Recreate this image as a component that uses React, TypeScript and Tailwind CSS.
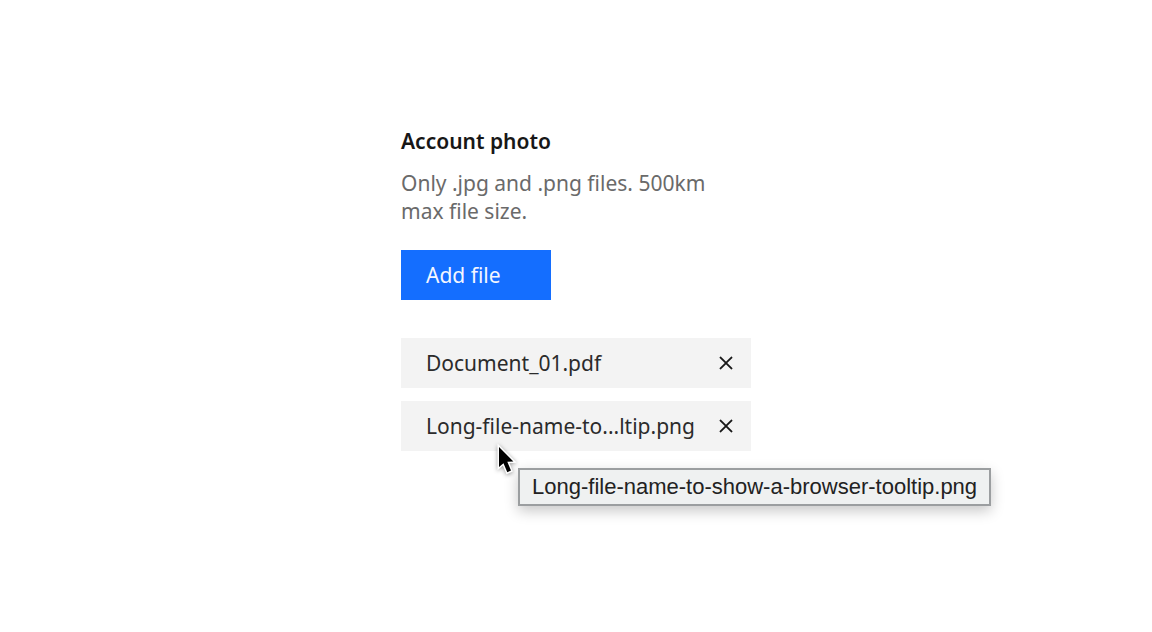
import { useState } from 'react';

type UploadedFile = { name: string; label: string; showTooltip?: boolean };

const initialFiles: UploadedFile[] = [
  { name: 'Document_01.pdf', label: 'Document_01.pdf' },
  {
    name: 'Long-file-name-to-show-a-browser-tooltip.png',
    label: 'Long-file-name-to...ltip.png',
    showTooltip: true,
  },
];

function CloseIcon() {
  return (
    <svg viewBox="0 0 32 32" className="size-[26px]" fill="currentColor" stroke="currentColor" strokeWidth="0.3" aria-hidden="true">
      <path d="M24 9.4 22.6 8 16 14.6 9.4 8 8 9.4l6.6 6.6L8 22.6 9.4 24l6.6-6.6 6.6 6.6 1.4-1.4-6.6-6.6L24 9.4z" />
    </svg>
  );
}

function Pointer() {
  return (
    <svg
      viewBox="0 0 20 34"
      className="absolute top-10 left-24 h-[34px] w-5 drop-shadow-[0_1px_2px_rgba(0,0,0,0.4)]"
      aria-hidden="true"
    >
      <path
        d="M2 6 L2 26 L6.5 22.2 L10.3 31.2 L14 29.6 L10.3 20.8 L16.4 20.4 Z"
        fill="#000"
        stroke="#fff"
        strokeWidth="3"
        paintOrder="stroke"
      />
    </svg>
  );
}

function FileRow({ file, onRemove }: { file: UploadedFile; onRemove: () => void }) {
  return (
    <li className="relative flex h-[50px] items-center justify-between bg-[#f3f3f3] pr-3 pl-[25px]">
      <span className="whitespace-nowrap">{file.label}</span>
      <button type="button" aria-label={`Remove ${file.name}`} onClick={onRemove} className="text-[#171717]">
        <CloseIcon />
      </button>
      {file.showTooltip && (
        <>
          <Pointer />
          <div
            role="tooltip"
            className="absolute top-[67px] left-[117px] border-2 border-[#9b9ea0] bg-[#eff1f1] px-3 font-['Liberation_Sans',Arial,sans-serif] text-[22px] leading-[34px] whitespace-nowrap text-[#222] shadow-[0_5px_14px_rgba(0,0,0,0.22)]"
          >
            {file.name}
          </div>
        </>
      )}
    </li>
  );
}

export default function App() {
  const [files, setFiles] = useState(initialFiles);

  return (
    <main className="min-h-screen bg-white px-4 pt-[127px] font-['Noto_Sans','Roboto',sans-serif] text-[21px] leading-7 text-[#2b2b2b]">
      <section className="mx-auto w-full max-w-[350px]">
        <h1 className="font-semibold text-[#171717]">Account photo</h1>
        <p className="mt-3.5 max-w-80 text-[#6a6a6a]">Only .jpg and .png files. 500km max file size.</p>
        <button type="button" className="mt-[25px] h-[50px] w-[150px] bg-[#146eff] pl-[25px] text-left text-[#f3f6ff]">
          Add file
        </button>
        <ul className="mt-[38px] flex flex-col gap-[13px]">
          {files.map((file) => (
            <FileRow
              key={file.name}
              file={file}
              onRemove={() => setFiles(files.filter((item) => item !== file))}
            />
          ))}
        </ul>
      </section>
    </main>
  );
}
